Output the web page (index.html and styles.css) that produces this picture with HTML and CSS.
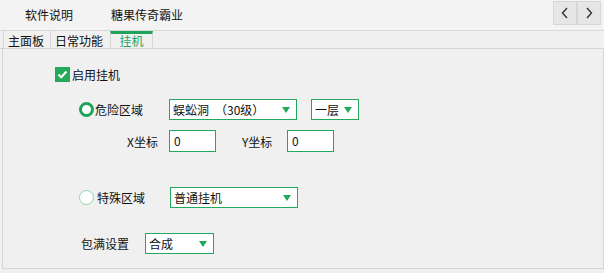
FILE: index.html
```html
<html>
<head>
  <link rel="stylesheet" href="styles.css">
</head>
<body>
  <div id="topbar">
    <div class="menu-item">软件说明</div>
    <div class="menu-item">糖果传奇霸业</div>
    <div id="nav">
      <div class="nav-btn">
        <svg width="8" height="12" viewBox="0 0 8 12"><polyline points="6,1 1.5,6 6,11" fill="none" stroke="#333" stroke-width="1.4"/></svg>
      </div>
      <div class="nav-btn">
        <svg width="8" height="12" viewBox="0 0 8 12"><polyline points="2,1 6.5,6 2,11" fill="none" stroke="#333" stroke-width="1.4"/></svg>
      </div>
    </div>
  </div>
  <div id="tabs">
    <div class="tab tab-main">主面板</div>
    <div class="tab tab-daily">日常功能</div>
    <div class="tab tab-active">挂机</div>
  </div>
  <div id="panel">
    <div class="row row-check">
      <div class="checkbox">
        <svg width="15" height="15" viewBox="0 0 15 15"><polyline points="3.5,7.5 6.2,10.2 11.5,4.5" fill="none" stroke="#fff" stroke-width="2"/></svg>
      </div>
      <span class="check-text">启用挂机</span>
    </div>

    <div class="row row-danger">
      <div class="radio-group">
        <div class="radio radio-on"></div>
        <span class="radio-text">危险区域</span>
      </div>
      <div class="combo combo-map"><span>蜈蚣洞　（30级）</span><i class="caret"></i></div>
      <div class="combo combo-floor"><span>一层</span><i class="caret"></i></div>
    </div>

    <div class="row row-coords">
      <span class="coord-label">X坐标</span>
      <div class="field">0</div>
      <span class="coord-label coord-y">Y坐标</span>
      <div class="field">0</div>
    </div>

    <div class="row row-special">
      <div class="radio-group">
        <div class="radio"></div>
        <span class="radio-text">特殊区域</span>
      </div>
      <div class="combo combo-special"><span>普通挂机</span><i class="caret"></i></div>
    </div>

    <div class="row row-bag">
      <span class="bag-label">包满设置</span>
      <div class="combo combo-bag"><span>合成</span><i class="caret"></i></div>
    </div>
  </div>
</body>
</html>
```

FILE: styles.css
```css
body {
  margin: 0;
  width: 604px;
  height: 273px;
  overflow: hidden;
  background-color: #f0f0f0;
  font-family: "Noto Sans CJK SC", "Microsoft YaHei", sans-serif;
  font-size: 12px;
  color: #111;
}

#topbar {
  display: flex;
  align-items: center;
  height: 30px;
  padding-left: 25px;
  background-color: #f3f3f3;
  border-bottom: 1px solid #d9d9d9;
}

.menu-item {
  margin-right: 38px;
  line-height: 14px;
}

#nav {
  display: flex;
  align-self: flex-start;
  margin-top: 1px;
  margin-left: auto;
  margin-right: 3px;
}

.nav-btn {
  display: flex;
  align-items: center;
  justify-content: center;
  width: 24px;
  height: 24px;
  box-sizing: border-box;
  background-color: #e6e6e6;
  border: 1px solid #d6d6d6;
}

#tabs {
  display: flex;
  height: 17px;
  padding-left: 3px;
  border-bottom: 1px solid #d5d5d5;
}

.tab {
  box-sizing: border-box;
  height: 17px;
  padding-top: 3px;
  padding-left: 4px;
  line-height: 14px;
  border-left: 1px solid #d5d5d5;
}

.tab-main {
  width: 47px;
}

.tab-daily {
  width: 60px;
}

.tab-active {
  width: 43px;
  padding: 0;
  text-align: center;
  color: #1fa35b;
  background-color: #f0f0f0;
  border-top: 3px solid #1fa35b;
  border-right: 1px solid #d5d5d5;
}

#panel {
  box-sizing: border-box;
  width: 602px;
  height: 220px;
  margin-left: 2px;
  padding-top: 18px;
  border: 1px solid #d5d5d5;
  border-top: none;
}

.row {
  display: flex;
  align-items: center;
}

.row-check {
  height: 15px;
  padding-left: 52px;
}

.checkbox {
  width: 15px;
  height: 15px;
  background-color: #22a95b;
}

.checkbox svg {
  display: block;
}

.check-text {
  margin-left: 2px;
}

.row-danger {
  height: 21px;
  margin-top: 17px;
  padding-left: 76px;
}

.radio-group {
  display: flex;
  align-items: center;
  width: 90px;
}

.radio {
  box-sizing: border-box;
  width: 15px;
  height: 15px;
  border-radius: 50%;
  background-color: #fff;
  border: 1.5px solid #8fd3a9;
}

.radio-on {
  border: 3.5px solid #1fa35b;
}

.radio-text {
  margin-left: 1px;
}

.combo {
  display: flex;
  align-items: center;
  box-sizing: border-box;
  height: 21px;
  padding-left: 3px;
  background-color: #fff;
  border: 1px solid #22a95b;
}

.caret {
  margin-left: auto;
  margin-right: 6px;
  width: 0;
  height: 0;
  border-left: 4px solid transparent;
  border-right: 4px solid transparent;
  border-top: 6px solid #22a95b;
}

.combo-map {
  width: 128px;
}

.combo-floor {
  width: 48px;
  margin-left: 14px;
}

.row-coords {
  height: 22px;
  margin-top: 10px;
  padding-left: 124px;
}

.coord-label {
  width: 42px;
}

.coord-y {
  width: 45px;
  margin-left: 26px;
}

.field {
  box-sizing: border-box;
  width: 47px;
  height: 22px;
  padding-left: 4px;
  line-height: 20px;
  background-color: #fff;
  border: 1px solid #22a95b;
}

.row-special {
  height: 21px;
  margin-top: 35px;
  padding-left: 76px;
}

.row-special .radio-group {
  width: 91px;
}

.row-special .radio-text {
  margin-left: 3px;
}

.combo-special {
  width: 128px;
}

.row-bag {
  height: 21px;
  margin-top: 25px;
  padding-left: 78px;
}

.bag-label {
  width: 64px;
}

.combo-bag {
  width: 69px;
}
```
